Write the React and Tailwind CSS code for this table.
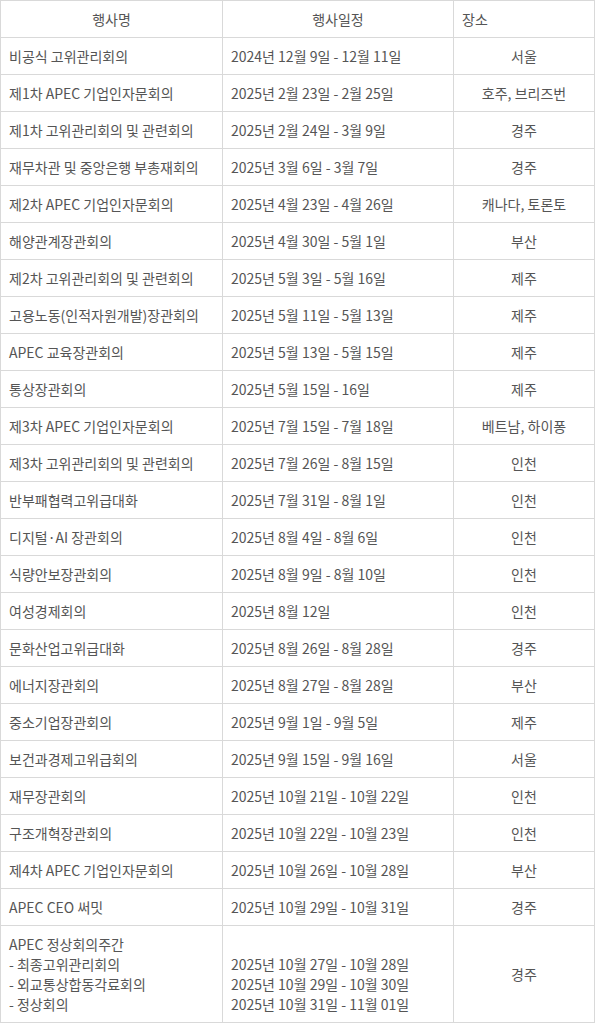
const events = [
  ["비공식 고위관리회의", "2024년 12월 9일 - 12월 11일", "서울"],
  ["제1차 APEC 기업인자문회의", "2025년 2월 23일 - 2월 25일", "호주, 브리즈번"],
  ["제1차 고위관리회의 및 관련회의", "2025년 2월 24일 - 3월 9일", "경주"],
  ["재무차관 및 중앙은행 부총재회의", "2025년 3월 6일 - 3월 7일", "경주"],
  ["제2차 APEC 기업인자문회의", "2025년 4월 23일 - 4월 26일", "캐나다, 토론토"],
  ["해양관계장관회의", "2025년 4월 30일 - 5월 1일", "부산"],
  ["제2차 고위관리회의 및 관련회의", "2025년 5월 3일 - 5월 16일", "제주"],
  ["고용노동(인적자원개발)장관회의", "2025년 5월 11일 - 5월 13일", "제주"],
  ["APEC 교육장관회의", "2025년 5월 13일 - 5월 15일", "제주"],
  ["통상장관회의", "2025년 5월 15일 - 16일", "제주"],
  ["제3차 APEC 기업인자문회의", "2025년 7월 15일 - 7월 18일", "베트남, 하이퐁"],
  ["제3차 고위관리회의 및 관련회의", "2025년 7월 26일 - 8월 15일", "인천"],
  ["반부패협력고위급대화", "2025년 7월 31일 - 8월 1일", "인천"],
  ["디지털·AI 장관회의", "2025년 8월 4일 - 8월 6일", "인천"],
  ["식량안보장관회의", "2025년 8월 9일 - 8월 10일", "인천"],
  ["여성경제회의", "2025년 8월 12일", "인천"],
  ["문화산업고위급대화", "2025년 8월 26일 - 8월 28일", "경주"],
  ["에너지장관회의", "2025년 8월 27일 - 8월 28일", "부산"],
  ["중소기업장관회의", "2025년 9월 1일 - 9월 5일", "제주"],
  ["보건과경제고위급회의", "2025년 9월 15일 - 9월 16일", "서울"],
  ["재무장관회의", "2025년 10월 21일 - 10월 22일", "인천"],
  ["구조개혁장관회의", "2025년 10월 22일 - 10월 23일", "인천"],
  ["제4차 APEC 기업인자문회의", "2025년 10월 26일 - 10월 28일", "부산"],
  ["APEC CEO 써밋", "2025년 10월 29일 - 10월 31일", "경주"],
];

const cell = "border border-[#d9d9d9] px-2 py-2 align-middle";

export default function App() {
  return (
    <div className="w-[595px] bg-white text-[#555] text-[14px] leading-5 font-['Noto_Sans_CJK_KR','Noto_Sans',sans-serif]">
      <table className="w-full table-fixed border-collapse">
        <colgroup>
          <col className="w-[222px]" />
          <col className="w-[231px]" />
          <col />
        </colgroup>
        <thead>
          <tr>
            <th className={`${cell} font-normal text-center`}>행사명</th>
            <th className={`${cell} font-normal text-center`}>행사일정</th>
            <th className={`${cell} font-normal text-left`}>장소</th>
          </tr>
        </thead>
        <tbody>
          {events.map(([name, date, place]) => (
            <tr key={name}>
              <td className={`${cell} text-left`}>{name}</td>
              <td className={`${cell} text-left`}>{date}</td>
              <td className={`${cell} text-center`}>{place}</td>
            </tr>
          ))}
          <tr>
            <td className={`${cell} text-left`}>
              APEC 정상회의주간
              <br />- 최종고위관리회의
              <br />- 외교통상합동각료회의
              <br />- 정상회의
            </td>
            <td className={`${cell} text-left`}>
              <br />2025년 10월 27일 - 10월 28일
              <br />2025년 10월 29일 - 10월 30일
              <br />2025년 10월 31일 - 11월 01일
            </td>
            <td className={`${cell} text-center`}>경주</td>
          </tr>
        </tbody>
      </table>
    </div>
  );
}
